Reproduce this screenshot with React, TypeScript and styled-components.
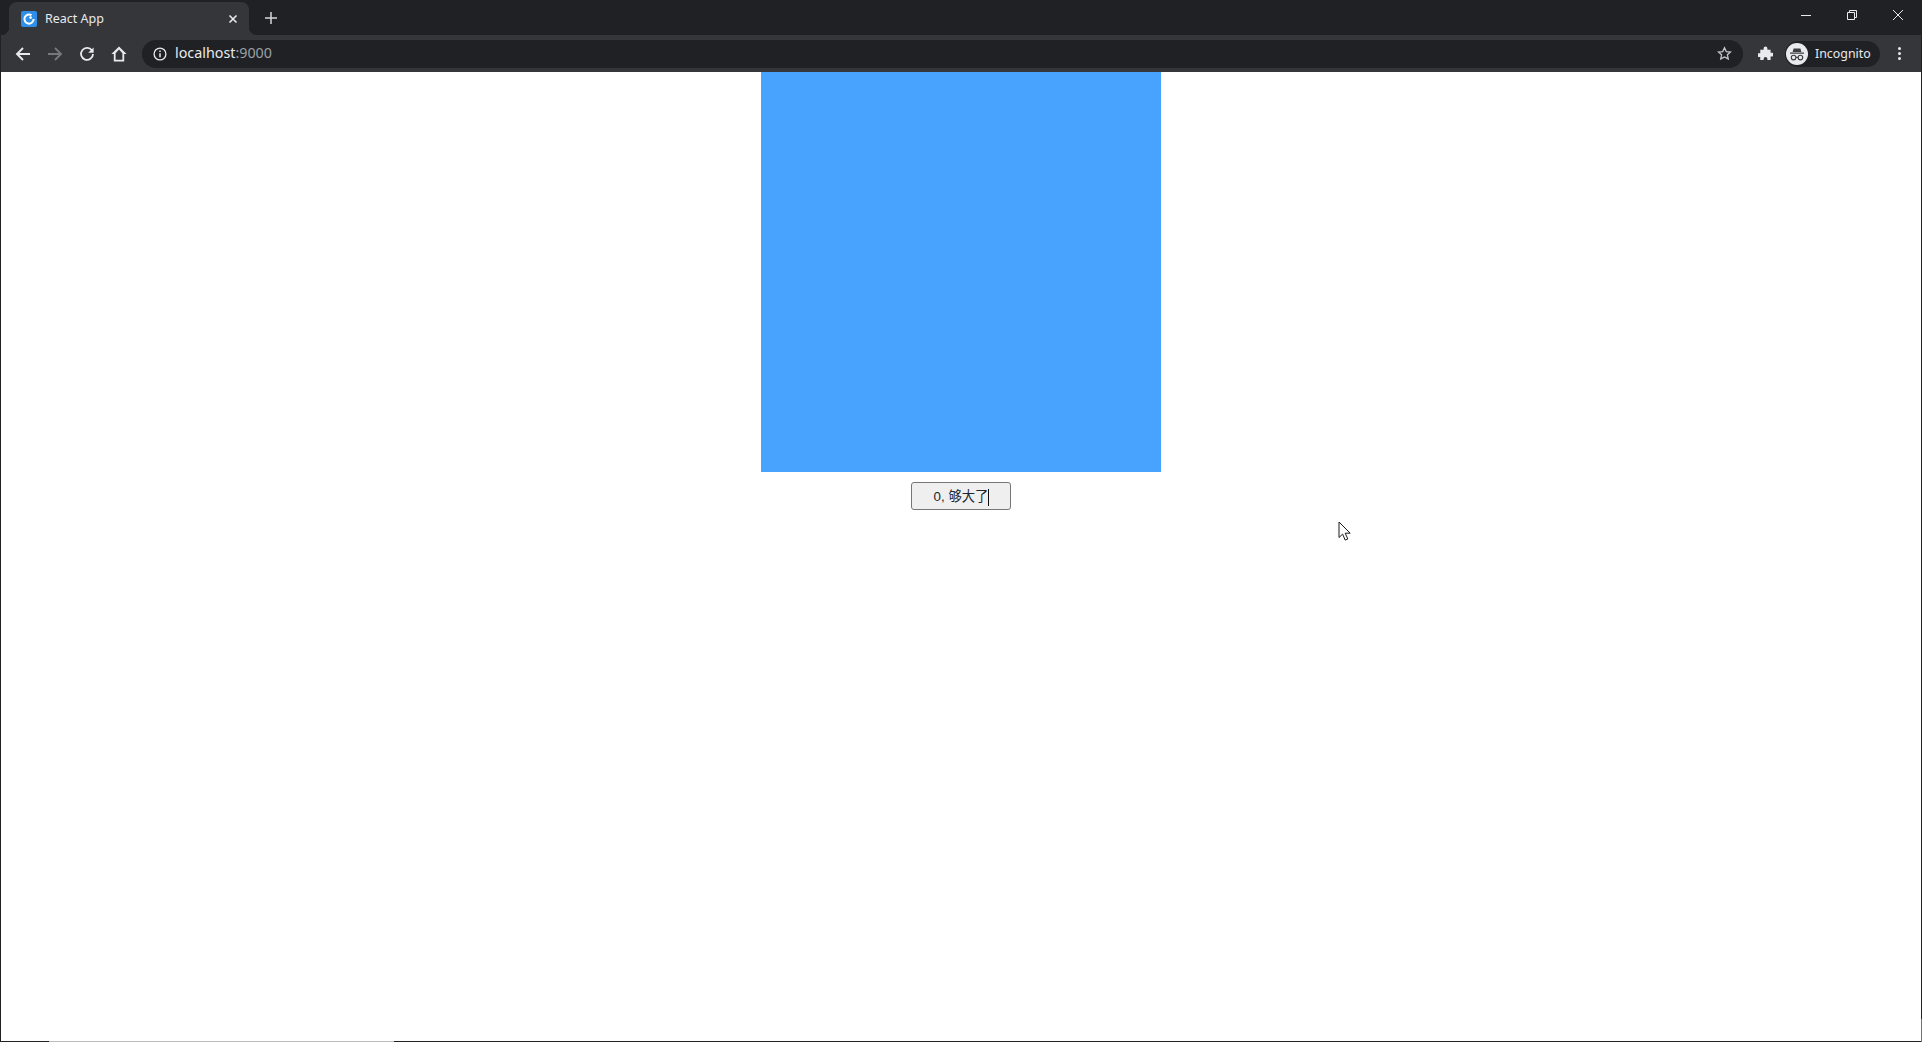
import styled, { createGlobalStyle } from 'styled-components';

const GlobalStyle = createGlobalStyle`
  * {
    box-sizing: border-box;
  }
  html, body {
    margin: 0;
    height: 100%;
    overflow: hidden;
    background: #fff;
  }
  #root {
    height: 100%;
  }
`;

export default function App() {
  return (
    <Window>
      <GlobalStyle />
      <TabStrip>
        <Tab>
          <Favicon viewBox="0 0 16 16">
            <rect width="16" height="16" rx="2" fill="#2f8fe8" />
            <path d="M10.5 4.2A4.6 4.6 0 1 0 12.6 8" fill="none" stroke="#fff" strokeWidth="2" />
            <circle cx="9.6" cy="6.6" r="1.3" fill="#fff" />
          </Favicon>
          <TabTitle>React App</TabTitle>
          <TabClose viewBox="0 0 10 10">
            <path d="M1.5 1.5l7 7M8.5 1.5l-7 7" stroke="#e8eaed" strokeWidth="1.6" />
          </TabClose>
        </Tab>
        <NewTab viewBox="0 0 12 12">
          <path d="M6 0v12M0 6h12" stroke="#d5d6d8" strokeWidth="1.5" />
        </NewTab>
        <WindowControls>
          <WinIcon viewBox="0 0 12 12">
            <path d="M1 6.5h10" stroke="#e8eaed" strokeWidth="1" />
          </WinIcon>
          <WinIcon viewBox="0 0 12 12">
            <path d="M1.5 3.5h7v7h-7zM3.5 3.5v-2h7v7h-2" fill="none" stroke="#e8eaed" strokeWidth="1" />
          </WinIcon>
          <WinIcon viewBox="0 0 12 12">
            <path d="M1 1l10 10M11 1L1 11" stroke="#e8eaed" strokeWidth="1" />
          </WinIcon>
        </WindowControls>
      </TabStrip>

      <Toolbar>
        <NavIcon viewBox="0 0 16 16">
          <path d="M15 8H2M8 2L2 8l6 6" fill="none" stroke="#e8eaed" strokeWidth="1.9" />
        </NavIcon>
        <NavIcon viewBox="0 0 16 16">
          <path d="M1 8h13M8 2l6 6-6 6" fill="none" stroke="#77787a" strokeWidth="1.9" />
        </NavIcon>
        <NavIcon viewBox="0 0 16 16">
          <path d="M13 4.6A6 6 0 1 0 14 8" fill="none" stroke="#e8eaed" strokeWidth="1.8" />
          <path d="M14.6 1.4v5.4H9.2z" fill="#e8eaed" />
        </NavIcon>
        <NavIcon viewBox="0 0 16 16">
          <path d="M8 .5L.4 8h2.4v7.5h10.4V8h2.4zM4.6 13.8V7.2L8 3.4l3.4 3.8v6.6z" fill="#e8eaed" fillRule="evenodd" />
        </NavIcon>
        <Omnibox>
          <InfoIcon viewBox="0 0 14 14">
            <circle cx="7" cy="7" r="5.9" fill="none" stroke="#e8eaed" strokeWidth="1.3" />
            <path d="M7 6.2v4M7 3.6v1.4" stroke="#e8eaed" strokeWidth="1.5" />
          </InfoIcon>
          <Url>
            localhost<Port>:9000</Port>
          </Url>
          <StarIcon viewBox="0 0 16 16">
            <path d="M8 1.8l1.9 4.1 4.5.5-3.3 3 .9 4.4L8 11.6l-4 2.2.9-4.4-3.3-3 4.5-.5z" fill="none" stroke="#c4c5c7" strokeWidth="1.4" />
          </StarIcon>
        </Omnibox>
        <Puzzle viewBox="0 0 16 16">
          <path d="M6 2.4a2 2 0 0 1 4 0V4h3.4v3.2H15a2 2 0 0 1 0 4h-1.6V15H10v-1.4a2 2 0 0 0-4 0V15H2.4v-3.4H1a2 2 0 0 1 0-4h1.4V4H6z" fill="#e8eaed" />
        </Puzzle>
        <Profile>
          <Avatar viewBox="0 0 22 22">
            <circle cx="11" cy="11" r="11" fill="#e8eaed" />
            <path d="M7.6 5.4h6.8l1 3.6H6.6zM4 9.6h14v1.2H4z" fill="#3c3d40" />
            <circle cx="7.6" cy="14.6" r="2.3" fill="none" stroke="#3c3d40" strokeWidth="1.1" />
            <circle cx="14.4" cy="14.6" r="2.3" fill="none" stroke="#3c3d40" strokeWidth="1.1" />
            <path d="M9.9 14.4h2.2" stroke="#3c3d40" strokeWidth="1.1" />
          </Avatar>
          <ProfileName>Incognito</ProfileName>
        </Profile>
        <Kebab>
          <Dot />
          <Dot />
          <Dot />
        </Kebab>
      </Toolbar>

      <Page>
        <BlueBox />
        <SizeButton>
          0, 够大了
          <Caret />
        </SizeButton>
        <Pointer viewBox="0 0 14 22">
          <path d="M1 1v15.5l3.6-3.4 2.6 6 2.6-1.1-2.6-5.8h5z" fill="#fff" stroke="#1a1a1a" strokeWidth="1" />
        </Pointer>
      </Page>
      <TaskbarEdge />
      <RightEdge />
    </Window>
  );
}

const Window = styled.div`
  position: relative;
  height: 100%;
  display: flex;
  flex-direction: column;
  border-left: 1px solid #202124;
  border-right: 1px solid #202124;
  border-bottom: 1px solid #202124;
  background: #fff;
`;

const TabStrip = styled.div`
  height: 35px;
  flex: none;
  display: flex;
  align-items: flex-end;
  padding-left: 8px;
  background: #202124;
`;

const Tab = styled.div`
  position: relative;
  width: 240px;
  height: 33px;
  display: flex;
  align-items: center;
  padding: 1px 11px 0 12px;
  background: #35363a;
  border-radius: 8px 8px 0 0;

  &::before,
  &::after {
    content: '';
    position: absolute;
    bottom: 0;
    width: 8px;
    height: 8px;
  }
  &::before {
    left: -8px;
    background: radial-gradient(circle at 0 0, #202124 8px, #35363a 8.5px);
  }
  &::after {
    right: -8px;
    background: radial-gradient(circle at 100% 0, #202124 8px, #35363a 8.5px);
  }
`;

const Favicon = styled.svg`
  width: 16px;
  height: 16px;
  flex: none;
`;

const TabTitle = styled.span`
  flex: 1;
  margin-left: 8px;
  padding-bottom: 2px;
  font-family: 'Noto Sans', sans-serif;
  font-size: 12.5px;
  color: #e8eaed;
`;

const TabClose = styled.svg`
  width: 10px;
  height: 10px;
`;

const NewTab = styled.svg`
  width: 12px;
  height: 12px;
  margin: 0 0 11px 16px;
`;

const WindowControls = styled.div`
  margin-left: auto;
  align-self: flex-start;
  display: flex;
  gap: 34px;
  padding: 9px 17px 0 0;
`;

const WinIcon = styled.svg`
  width: 12px;
  height: 12px;
`;

const Toolbar = styled.div`
  height: 37px;
  flex: none;
  display: flex;
  align-items: center;
  padding: 0 20px 0 14px;
  background: #35363a;
`;

const NavIcon = styled.svg`
  width: 16px;
  height: 16px;
  margin-right: 16px;
  flex: none;
`;

const Omnibox = styled.div`
  flex: 1;
  height: 28px;
  margin-left: -1px;
  display: flex;
  align-items: center;
  padding: 0 11px;
  border-radius: 14px;
  background: #202124;
`;

const InfoIcon = styled.svg`
  width: 14px;
  height: 14px;
  flex: none;
`;

const Url = styled.span`
  flex: 1;
  margin-left: 8px;
  padding-bottom: 2px;
  font-family: 'Noto Sans', sans-serif;
  font-size: 14.3px;
  color: #e8eaed;
`;

const Port = styled.span`
  color: #9aa0a6;
`;

const StarIcon = styled.svg`
  width: 15px;
  height: 15px;
`;

const Puzzle = styled.svg`
  width: 15px;
  height: 15px;
  margin: 0 12px 0 15px;
  flex: none;
`;

const Profile = styled.div`
  width: 95px;
  height: 26px;
  display: flex;
  align-items: center;
  padding-left: 1px;
  border-radius: 13px;
  background: #202124;
  flex: none;
`;

const Avatar = styled.svg`
  width: 22px;
  height: 22px;
  flex: none;
`;

const ProfileName = styled.span`
  margin-left: 7px;
  padding-bottom: 1px;
  font-family: 'Noto Sans', sans-serif;
  font-size: 12.4px;
  color: #e8eaed;
`;

const Kebab = styled.div`
  margin-left: 18px;
  display: flex;
  flex-direction: column;
  gap: 2px;
`;

const Dot = styled.span`
  width: 3px;
  height: 3px;
  border-radius: 50%;
  background: #e8eaed;
`;

const Page = styled.main`
  position: relative;
  flex: 1;
  display: flex;
  flex-direction: column;
  align-items: center;
  background: #fff;
`;

const BlueBox = styled.div`
  width: 400px;
  height: 400px;
  background: #48a3ff;
`;

const SizeButton = styled.button`
  width: 100px;
  height: 28px;
  margin-top: 10px;
  padding: 0;
  border: 1px solid #767676;
  border-radius: 3px;
  background: #efefef;
  color: #1c2530;
  font-family: 'Liberation Sans', 'Noto Sans CJK SC', sans-serif;
  font-size: 13.33px;
`;

const Caret = styled.span`
  display: inline-block;
  width: 1px;
  height: 17px;
  margin-right: -1px;
  vertical-align: middle;
  background: #111;
`;

const Pointer = styled.svg`
  position: absolute;
  left: 1337px;
  top: 449px;
  width: 14px;
  height: 22px;
`;

const TaskbarEdge = styled.div`
  position: absolute;
  left: 48px;
  bottom: -1px;
  width: 345px;
  height: 1px;
  background: #bbb;
`;

const RightEdge = styled.div`
  position: absolute;
  right: -1px;
  bottom: -1px;
  width: 1px;
  height: 23px;
  background: #3f7fc0;
`;
